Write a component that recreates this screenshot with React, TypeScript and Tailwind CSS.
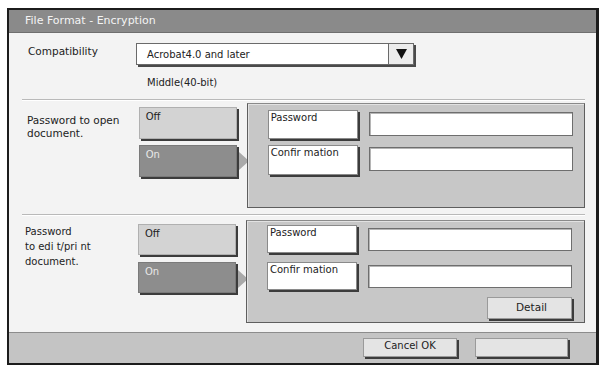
import React from 'react';

const font = { fontFamily: '"DejaVu Sans", Verdana, sans-serif' };

function Arrow() {
  return (
    <svg width="10" height="18" viewBox="0 0 10 18" className="block">
      <polygon points="0,0 10,9 0,18" fill="#a9a9a9" />
    </svg>
  );
}

function ToggleButtons({ h, gap }: { h: string; gap: string }) {
  return (
    <div className={`w-[98px] flex flex-col ${gap}`}>
      <div
        className={`${h} bg-[#d3d3d3] border border-[#b0b0b0] shadow-[2px_2px_0_#3c3c3c] px-[6px] pt-[2px] text-[10px] leading-[13px] text-[#222]`}
      >
        Off
      </div>
      <div
        className={`${h} bg-[#8d8d8d] border border-[#7a7a7a] shadow-[2px_2px_0_#3c3c3c] px-[6px] pt-[2px] text-[10px] leading-[13px] text-[#e8e8e8]`}
      >
        On
      </div>
    </div>
  );
}

function FieldRow({ label, btnH, inputH, inputMt }: { label: string; btnH: string; inputH: string; inputMt: string }) {
  return (
    <div className="flex items-start">
      <div
        className={`w-[90px] ${btnH} bg-white border border-[#8a8a8a] shadow-[2px_2px_0_#3c3c3c] px-[2px] text-[10px] leading-[13px] text-[#222] whitespace-pre`}
      >
        {label}
      </div>
      <div className={`ml-[11px] ${inputMt} w-[204px] ${inputH} bg-white border border-[#6e6e6e] shadow-[inset_1px_1px_0_#b5b5b5]`} />
    </div>
  );
}

function Separator() {
  return <div className="h-[2px] border-t border-[#b9b9b9] border-b border-b-white" />;
}

export default function App() {
  return (
    <div className="w-[601px] h-[367px] bg-white pt-[8px] pl-[7px]" style={font}>
      <div className="w-[592px] h-[357px] border-2 border-r-[3px] border-[#1c1c1c] bg-[#f3f3f3] flex flex-col">
        {/* title */}
        <div className="h-[23px] bg-[#8a8a8a] border-b border-[#6f6f6f] pl-[16px] flex items-center text-[11px] text-[#f4f4f4]">
          File Format - Encryption
        </div>

        {/* body */}
        <div className="h-[299px] pl-[13px] pr-[11px] flex flex-col">
          <div className="flex pt-[10px]">
            <div className="w-[114px] pl-[6px] pt-[1px] text-[10.5px] leading-[14px] text-[#222]">Compatibility</div>
            <div className="w-[278px] h-[22px] bg-white border border-[#6a6a6a] shadow-[2px_2px_0_#4a4a4a] flex">
              <div className="flex-1 pl-[10px] flex items-center text-[10px] text-[#222]">Acrobat4.0 and later</div>
              <div className="w-[25px] border-l border-[#6a6a6a] bg-[#ececec] flex items-center justify-center">
                <svg width="11" height="10" viewBox="0 0 11 10">
                  <polygon points="0,0 11,0 5.5,10" fill="#111" />
                </svg>
              </div>
            </div>
          </div>
          <div className="mt-[11px] pl-[125px] text-[10px] leading-[14px] text-[#222]">Middle(40-bit)</div>
          <div className="mt-[9px]">
            <Separator />
          </div>

          {/* section 1 */}
          <div className="mt-[2px] flex">
            <div className="w-[117px] pl-[5px] pt-[11px] text-[10.5px] leading-[13px] text-[#222]">
              Password to open
              <br />
              document.
            </div>
            <div className="pt-[4px]">
              <ToggleButtons h="h-[32px]" gap="gap-[6px]" />
            </div>
            <div className="w-[10px] pt-[49px] pl-[2px]">
              <Arrow />
            </div>
            <div className="w-[339px] h-[105px] bg-[#c7c7c7] border border-[#5e5e5e] border-t-[#8a8a8a] shadow-[inset_1px_1px_0_#e2e2e2] pl-[20px] pt-[6px] flex flex-col gap-[6px]">
              <FieldRow label="Password" btnH="h-[29px]" inputH="h-[24px]" inputMt="mt-[2px]" />
              <FieldRow label="Confir mation" btnH="h-[30px]" inputH="h-[24px]" inputMt="mt-[2px]" />
            </div>
          </div>

          <div className="mt-[6px]">
            <Separator />
          </div>

          {/* section 2 */}
          <div className="mt-[4px] flex">
            <div className="w-[117px] pl-[3px] pt-[4px] text-[10px] leading-[15px] text-[#222]">
              Password
              <br />
              to edi t/pri nt
              <br />
              document.
            </div>
            <div className="pt-[4px]">
              <ToggleButtons h="h-[31px]" gap="gap-[7px]" />
            </div>
            <div className="w-[10px] pt-[50px] pl-[2px]">
              <Arrow />
            </div>
            <div className="w-[339px] h-[103px] bg-[#c7c7c7] border border-[#5e5e5e] border-t-[#8a8a8a] shadow-[inset_1px_1px_0_#e2e2e2] pl-[20px] pr-[12px] pt-[4px] flex flex-col">
              <FieldRow label="Password" btnH="h-[28px]" inputH="h-[23px]" inputMt="mt-[3px]" />
              <div className="mt-[9px]">
                <FieldRow label="Confir mation" btnH="h-[28px]" inputH="h-[23px]" inputMt="mt-[3px]" />
              </div>
              <div className="mt-[7px] flex justify-end">
                <div className="w-[85px] h-[22px] bg-[#e4e4e4] border border-[#9a9a9a] shadow-[2px_2px_0_#3c3c3c] flex items-center justify-center pl-[4px] text-[10.5px] text-[#222]">
                  Detail
                </div>
              </div>
            </div>
          </div>
        </div>

        {/* footer */}
        <div className="h-[31px] bg-[#c4c4c4] border-t border-[#8c8c8c] flex justify-end items-start pt-[5px] pr-[28px] gap-[18px]">
          <div className="w-[94px] h-[19px] bg-[#e4e4e4] border border-[#9a9a9a] shadow-[2px_2px_0_#3c3c3c] flex justify-center text-[10px] leading-[13px] text-[#222]">
            Cancel OK
          </div>
          <div className="w-[93px] h-[19px] bg-[#e4e4e4] border border-[#9a9a9a] shadow-[2px_2px_0_#3c3c3c]" />
        </div>
      </div>
    </div>
  );
}
